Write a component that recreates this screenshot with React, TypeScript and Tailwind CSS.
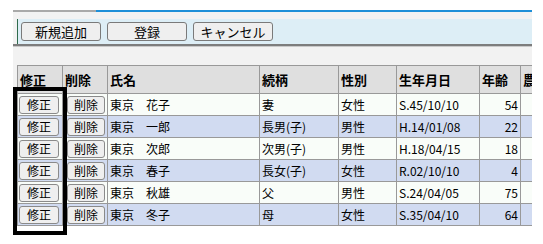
import React from 'react';

interface Person {
  name: string;
  relation: string;
  sex: string;
  birth: string;
  age: number;
}

const PEOPLE: Person[] = [
  { name: '東京　花子', relation: '妻', sex: '女性', birth: 'S.45/10/10', age: 54 },
  { name: '東京　一郎', relation: '長男(子)', sex: '男性', birth: 'H.14/01/08', age: 22 },
  { name: '東京　次郎', relation: '次男(子)', sex: '男性', birth: 'H.18/04/15', age: 18 },
  { name: '東京　春子', relation: '長女(子)', sex: '女性', birth: 'R.02/10/10', age: 4 },
  { name: '東京　秋雄', relation: '父', sex: '男性', birth: 'S.24/04/05', age: 75 },
  { name: '東京　冬子', relation: '母', sex: '女性', birth: 'S.35/04/10', age: 64 },
];

const font = { fontFamily: '"Noto Sans CJK JP", "Liberation Sans", sans-serif' };

function ToolButton({ label }: { label: string }) {
  return (
    <button className="w-[80px] h-[19px] bg-[#efefef] border border-[#7a7a7a] rounded-[3px] text-[13px] leading-[17px] text-black">
      {label}
    </button>
  );
}

function CellButton({ label, width }: { label: string; width: string }) {
  return (
    <button
      className={`${width} h-[18px] bg-[#efefef] border border-[#8a8a8a] rounded-[3px] text-[12px] leading-[16px] text-black`}
    >
      {label}
    </button>
  );
}

export default function App() {
  return (
    <div className="min-h-screen bg-white pl-[13px] pt-[10px]" style={font}>
      <div className="relative w-[519px]">
        <div className="bg-[#f2f2f2] overflow-hidden">
          <div className="flex h-[2px]">
            <div className="w-[83px] bg-[#a9a9a9]" />
            <div className="flex-1 bg-[#1e8fd8]" />
          </div>
          <div className="h-[7px]" />
          <div className="ml-[4px] h-[25px] bg-[#ddeef6] border-l border-[#2e6b4c] flex items-center gap-[6px] pl-[3px]">
            <ToolButton label="新規追加" />
            <ToolButton label="登録" />
            <ToolButton label="キャンセル" />
          </div>
          <div className="h-[2px] bg-[#7d7d7d]" />
          <div className="h-[1px] bg-[#c9c9c9]" />
          <div className="h-[18px]" />

          <div className="pl-[4px]">
            <table className="table-fixed border-collapse w-[560px] text-[12px] text-black">
              <colgroup>
                <col className="w-[45px]" />
                <col className="w-[45px]" />
                <col className="w-[152px]" />
                <col className="w-[79px]" />
                <col className="w-[58px]" />
                <col className="w-[83px]" />
                <col className="w-[41px]" />
                <col className="w-[57px]" />
              </colgroup>
              <thead>
                <tr className="h-[28px] bg-[#dfdfdf]">
                  {['修正', '削除', '氏名', '続柄', '性別', '生年月日', '年齢', '農'].map((h) => (
                    <th
                      key={h}
                      className="border border-[#999999] px-[2px] text-left font-bold text-[13px] leading-[16px] whitespace-nowrap overflow-hidden"
                    >
                      {h}
                    </th>
                  ))}
                </tr>
              </thead>
              <tbody>
                {PEOPLE.map((p, i) => (
                  <tr key={p.name} className={`h-[22px] ${i % 2 === 0 ? 'bg-[#f9fdf9]' : 'bg-[#d1dbf1]'}`}>
                    <td className="border border-[#999999] pl-[1px] py-0">
                      <div className="flex">
                        <CellButton label="修正" width="w-[40px]" />
                      </div>
                    </td>
                    <td className="border border-[#999999] pl-[4px] py-0">
                      <div className="flex">
                        <CellButton label="削除" width="w-[38px]" />
                      </div>
                    </td>
                    <td className="border border-[#999999] px-[2px] leading-[16px] whitespace-nowrap">{p.name}</td>
                    <td className="border border-[#999999] px-[2px] leading-[16px] whitespace-nowrap">{p.relation}</td>
                    <td className="border border-[#999999] px-[2px] leading-[16px] whitespace-nowrap">{p.sex}</td>
                    <td className="border border-[#999999] px-[2px] leading-[16px] whitespace-nowrap">{p.birth}</td>
                    <td className="border border-[#999999] px-[2px] leading-[16px] text-right">{p.age}</td>
                    <td className="border border-[#999999] px-[2px] leading-[16px]" />
                  </tr>
                ))}
              </tbody>
            </table>
          </div>
        </div>

        <div className="absolute left-0 top-[77px] w-[54px] h-[148px] border-4 border-black bg-[#f2f2f2]/0 pointer-events-none" />
      </div>
    </div>
  );
}
